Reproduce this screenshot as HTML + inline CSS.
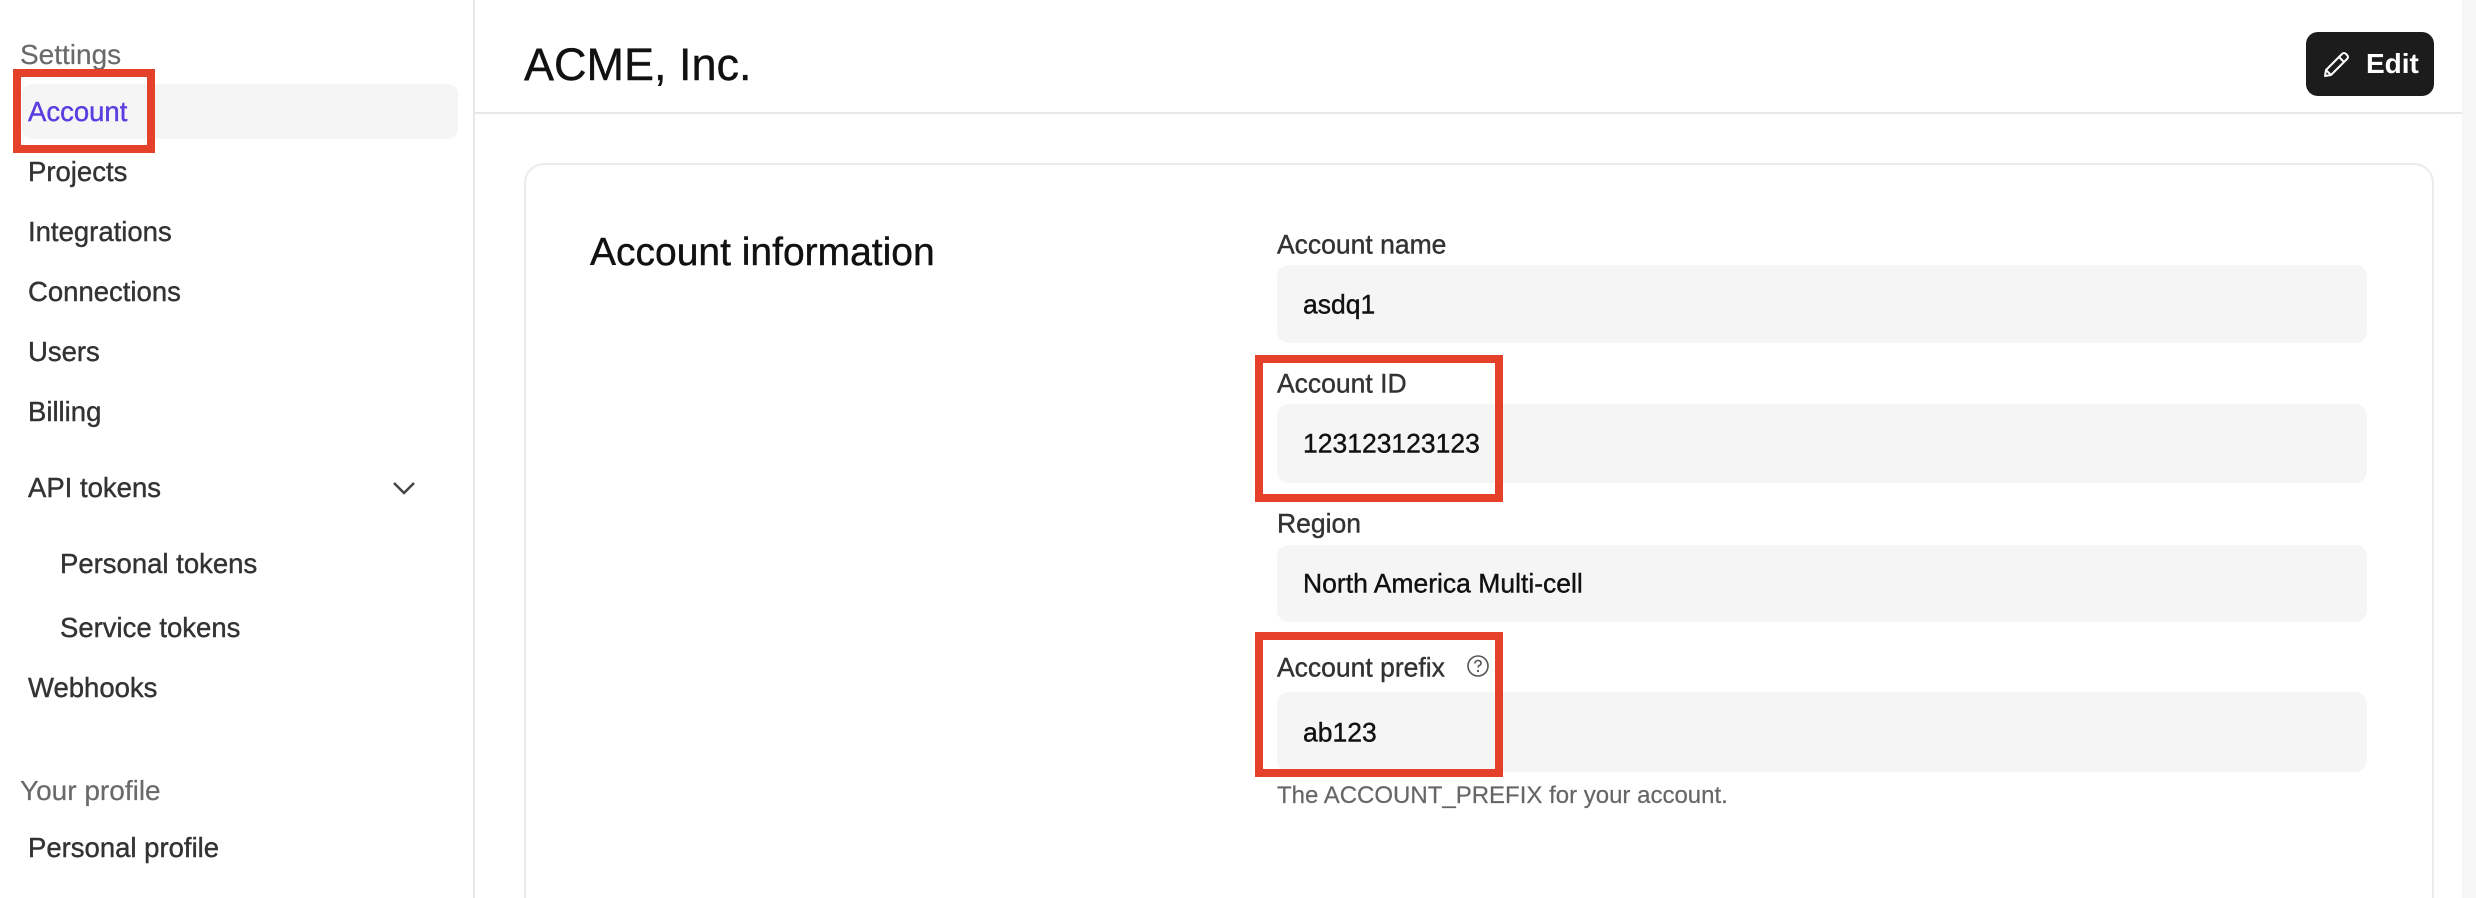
<!DOCTYPE html>
<html style="overflow:hidden;width:2476px;height:898px"><head><meta charset="utf-8"><style>
*{margin:0;padding:0;box-sizing:border-box}
body{width:2476px;height:898px;overflow:hidden;background:#fff;font-family:"Liberation Sans",sans-serif;position:relative;color:#1a1a1a;-webkit-text-stroke:0.4px currentColor}
.a{position:absolute;white-space:nowrap}
.nav{position:absolute;left:28px;font-size:27.5px;color:#333;transform:translateY(-50%);white-space:nowrap}
.sec{position:absolute;left:20px;font-size:28px;color:#6a6a6a;transform:translateY(-50%);white-space:nowrap;-webkit-text-stroke:0.2px currentColor}
.lbl{position:absolute;left:1277px;font-size:26.5px;color:#333;transform:translateY(-50%);white-space:nowrap}
.inp{position:absolute;left:1277px;width:1090px;background:#f5f5f5;border-radius:12px}
.val{position:absolute;left:1303px;font-size:26.5px;color:#111;transform:translateY(-50%);white-space:nowrap}
.red{position:absolute;border:8px solid #e5402a}
</style></head><body>
<div class="a" style="left:473px;top:0;width:2px;height:898px;background:#e8e8e8"></div>
<div class="a" style="left:475px;top:112px;width:1987px;height:2px;background:#e8e8e8"></div>
<div class="a" style="left:2462px;top:0;width:14px;height:898px;background:#f7f7f7"></div>

<div class="sec" style="top:55px">Settings</div>
<div class="a" style="left:22px;top:84px;width:436px;height:55px;background:#f5f5f5;border-radius:10px"></div>
<div class="nav" style="top:112px;color:#5b3de0">Account</div>
<div class="red" style="left:13px;top:69px;width:142px;height:84px"></div>
<div class="nav" style="top:172px">Projects</div>
<div class="nav" style="top:232px">Integrations</div>
<div class="nav" style="top:292px">Connections</div>
<div class="nav" style="top:352px">Users</div>
<div class="nav" style="top:412px">Billing</div>
<div class="nav" style="top:488px">API tokens</div>
<svg class="a" style="left:392px;top:478px" width="24" height="20" viewBox="0 0 24 20"><path d="M2 5 L12 15 L22 5" fill="none" stroke="#444" stroke-width="2.5"/></svg>
<div class="nav" style="top:564px;left:60px">Personal tokens</div>
<div class="nav" style="top:628px;left:60px">Service tokens</div>
<div class="nav" style="top:688px">Webhooks</div>
<div class="sec" style="top:791px">Your profile</div>
<div class="nav" style="top:848px">Personal profile</div>

<div class="a" style="left:524px;top:65px;transform:translateY(-50%);font-size:45px;color:#111">ACME, Inc.</div>
<div class="a" style="left:2306px;top:32px;width:128px;height:64px;background:#1c1c1c;border-radius:12px"></div>
<svg class="a" style="left:2322px;top:49px" width="30" height="30" viewBox="0 0 30 30"><path d="M3 27 L4 21 L20 5 Q22 3 24 5 L25 6 Q27 8 25 10 L9 26 Z M17 8 L22 13 M4 21 L9 26" fill="none" stroke="#fff" stroke-width="2" stroke-linejoin="round"/></svg>
<div class="a" style="left:2366px;top:64px;transform:translateY(-50%);font-size:28px;font-weight:bold;color:#fff;-webkit-text-stroke:0">Edit</div>

<div class="a" style="left:524px;top:163px;width:1910px;height:760px;border:2px solid #ebebeb;border-radius:20px"></div>
<div class="a" style="left:590px;top:253px;transform:translateY(-50%);font-size:39px;color:#111">Account information</div>

<div class="lbl" style="top:245px">Account name</div>
<div class="inp" style="top:265px;height:78px"></div>
<div class="val" style="top:305px">asdq1</div>

<div class="lbl" style="top:384px">Account ID</div>
<div class="inp" style="top:404px;height:79px"></div>
<div class="val" style="top:444px">123123123123</div>
<div class="red" style="left:1255px;top:355px;width:248px;height:147px"></div>

<div class="lbl" style="top:524px">Region</div>
<div class="inp" style="top:545px;height:77px"></div>
<div class="val" style="top:584px">North America Multi-cell</div>

<div class="lbl" style="top:668px">Account prefix</div>
<svg class="a" style="left:1466px;top:654px" width="24" height="24" viewBox="0 0 24 24"><circle cx="12" cy="12" r="10" fill="none" stroke="#555" stroke-width="1.6"/><path d="M9 9.5 Q9 6.5 12 6.5 Q15 6.5 15 9.3 Q15 11 12.5 12 L12 13.5" fill="none" stroke="#555" stroke-width="1.6"/><circle cx="12" cy="17" r="1.1" fill="#555"/></svg>
<div class="inp" style="top:692px;height:80px"></div>
<div class="val" style="top:733px">ab123</div>
<div class="red" style="left:1255px;top:632px;width:248px;height:145px"></div>

<div class="a" style="left:1277px;top:796px;transform:translateY(-50%);font-size:24px;color:#666;-webkit-text-stroke:0.2px currentColor">The ACCOUNT_PREFIX for your account.</div>
</body></html>
